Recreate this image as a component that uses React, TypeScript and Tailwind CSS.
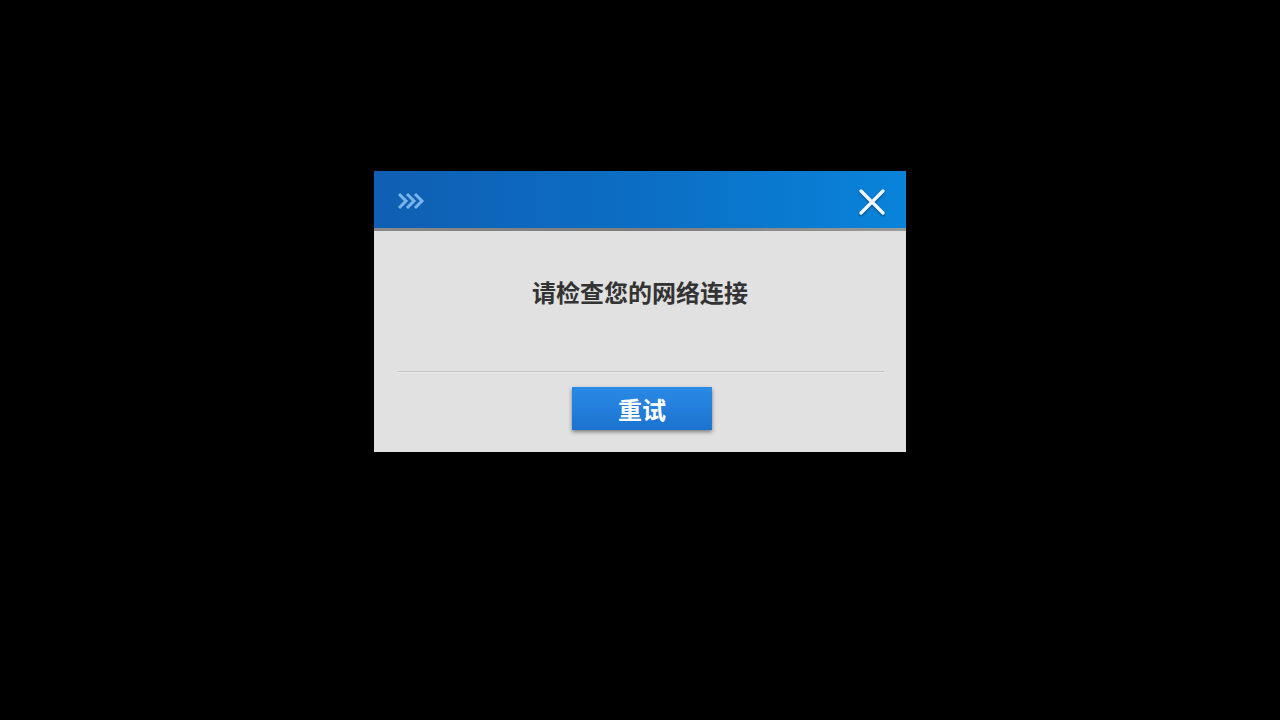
import React from 'react';

const cjk = { fontFamily: '"Noto Sans CJK SC", "Noto Sans", sans-serif' };

const Chevrons = () => (
  <svg width="28" height="18" viewBox="0 0 28 18" fill="none">
    {[0, 8, 16].map((x) => (
      <path key={x} d={`M${x + 1} 2 L${x + 8} 9 L${x + 1} 16`} stroke="#7ab4ea" strokeWidth="3" strokeLinejoin="miter" />
    ))}
  </svg>
);

const CloseIcon = () => (
  <svg width="30" height="30" viewBox="0 0 30 30" fill="none" style={{ filter: 'drop-shadow(0 1px 1px rgba(0,0,0,0.45))' }}>
    <path d="M4 4 L26 26 M26 4 L4 26" stroke="#f2f6fa" strokeWidth="3.4" strokeLinecap="round" />
  </svg>
);

export default function App() {
  return (
    <div className="w-[1280px] h-[720px] bg-black flex items-start justify-center pt-[171px]" style={cjk}>
      <div className="w-[532px] h-[281px] flex flex-col bg-[#e1e1e1]">
        <div className="h-[57px] flex items-center justify-between pl-[24px] pr-[19px] bg-gradient-to-r from-[#0f5fb3] via-[#0b6ec4] to-[#0884da]">
          <div className="mt-[3px]">
            <Chevrons />
          </div>
          <button className="mt-[4px]">
            <CloseIcon />
          </button>
        </div>
        <div className="h-[3px] bg-gradient-to-r from-[#8a8a8a] via-[#7c7c7c] to-[#9a9a9a]" />
        <div className="flex-1 flex flex-col items-center">
          <div className="mt-[46px] text-[24px] leading-[30px] font-bold text-[#333333]">请检查您的网络连接</div>
          <div className="mt-[64px] w-[487px] h-[2px] bg-[#c2c2c2] border-b border-[#ececec]" />
          <button className="mt-[14px] ml-[4px] w-[140px] h-[43px] bg-gradient-to-b from-[#2a8ae6] to-[#1b73cf] text-white text-[24px] font-bold shadow-[0_2px_4px_rgba(0,0,0,0.45)] flex items-center justify-center">
            重试
          </button>
        </div>
      </div>
    </div>
  );
}
